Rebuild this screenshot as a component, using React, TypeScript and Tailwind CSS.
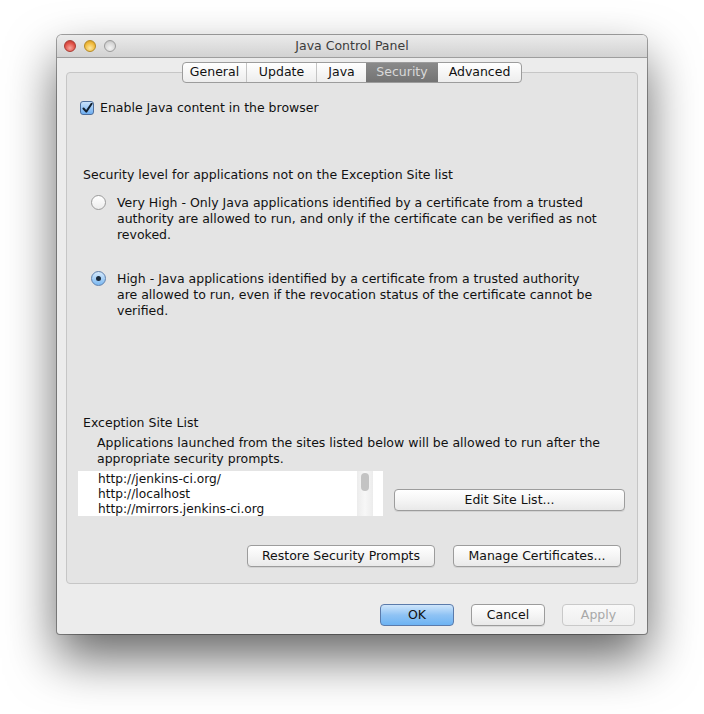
import React from "react";

const font = { fontFamily: '"DejaVu Sans", "Liberation Sans", sans-serif' };

function Btn({ w, label, kind }: { w: string; label: string; kind?: "ok" | "off" }) {
  const base = "h-[22px] rounded-[4px] border flex items-center justify-center text-[12.5px] ";
  if (kind === "ok")
    return (
      <div className={base + w + " border-[#5b7bab] bg-gradient-to-b from-[#cfe6fb] via-[#8fc3f4] to-[#6db3f3] text-[#111]"}>{label}</div>
    );
  if (kind === "off")
    return (
      <div className={base + w + " border-[#c9c9c9] bg-gradient-to-b from-[#f9f9f9] to-[#efefef] text-[#a8a8a8]"}>{label}</div>
    );
  return (
    <div className={base + w + " border-[#9c9c9c] bg-gradient-to-b from-white via-[#f5f5f5] to-[#e9e9e9] text-[#111] shadow-[0_1px_0_rgba(0,0,0,0.08)]"}>{label}</div>
  );
}

function Radio({ on }: { on?: boolean }) {
  if (on)
    return (
      <div className="w-[15px] h-[15px] rounded-full border border-[#5f80ad] bg-gradient-to-b from-[#d5e9fb] to-[#7ab8f1] flex items-center justify-center shrink-0">
        <div className="w-[5px] h-[5px] rounded-full bg-[#1c2a3a]" />
      </div>
    );
  return <div className="w-[15px] h-[15px] rounded-full border border-[#9a9a9a] bg-gradient-to-b from-white to-[#ececec] shrink-0" />;
}

const tabs = [
  { label: "General", w: "w-[63px]" },
  { label: "Update", w: "w-[70px]" },
  { label: "Java", w: "w-[50px]" },
  { label: "Security", w: "w-[72px]" },
  { label: "Advanced", w: "w-[83px]" },
];

export default function App() {
  return (
    <div className="w-[704px] h-[714px] bg-white pt-[35px] pl-[57px]" style={font}>
      <div className="w-[590px] h-[599px] rounded-t-[5px] rounded-b-[3px] bg-[#ececec] shadow-[0_24px_50px_rgba(0,0,0,0.6),0_0_0_1px_rgba(0,0,0,0.35)] flex flex-col">
        {/* title bar */}
        <div className="h-[23px] rounded-t-[5px] bg-gradient-to-b from-[#ebebeb] to-[#d2d2d2] border-b border-[#9e9e9e] flex items-center relative">
          <div className="flex gap-[8px] pl-[7px]">
            <div className="w-[12px] h-[12px] rounded-full border border-[#a83b33] bg-[radial-gradient(circle_at_50%_70%,#f7a49b,#e04f45_60%,#b3342c)]" />
            <div className="w-[12px] h-[12px] rounded-full border border-[#b58a25] bg-[radial-gradient(circle_at_50%_70%,#fde7a0,#f0b93a_60%,#c7901f)]" />
            <div className="w-[12px] h-[12px] rounded-full border border-[#9c9c9c] bg-[radial-gradient(circle_at_50%_70%,#f4f4f4,#d6d6d6_60%,#b4b4b4)]" />
          </div>
          <div className="absolute inset-0 flex items-center justify-center text-[12.5px] text-[#3c3c3c]">Java Control Panel</div>
        </div>

        {/* tabs */}
        <div className="mt-[4px] flex justify-center relative z-10">
          <div className="flex h-[21px] rounded-[4px] border border-[#9c9c9c] bg-gradient-to-b from-white to-[#ededed] overflow-hidden text-[12.5px]">
            {tabs.map((t, i) => (
              <div
                key={t.label}
                className={
                  t.w +
                  " flex items-center justify-center " +
                  (t.label === "Security"
                    ? "bg-gradient-to-b from-[#8a8a8a] to-[#737373] text-[#d9d9d9]"
                    : "text-[#111]") +
                  (i > 0 && t.label !== "Security" && tabs[i - 1].label !== "Security" ? " border-l border-[#c4c4c4]" : "")
                }
              >
                {t.label}
              </div>
            ))}
          </div>
        </div>

        {/* panel */}
        <div className="ml-[9px] -mt-[11px] w-[572px] h-[512px] rounded-[4px] border border-[#c6c6c6] bg-[#e4e4e4] text-[12.5px] text-[#111] flex flex-col">
          <div className="mt-[27px] ml-[13px] flex items-center gap-[6px] h-[16px]">
            <div className="w-[14px] h-[14px] rounded-[3px] border border-[#4d6e9c] bg-gradient-to-b from-[#c9e2fa] to-[#6eaef0] flex items-center justify-center">
              <svg width="11" height="11" viewBox="0 0 11 11">
                <path d="M1.5 5.5 L4.3 8.6 L9.6 0.8" fill="none" stroke="#13202e" strokeWidth="2" strokeLinecap="round" strokeLinejoin="round" />
              </svg>
            </div>
            <span>Enable Java content in the browser</span>
          </div>

          <div className="mt-[51px] ml-[16px] leading-[16px]">Security level for applications not on the Exception Site list</div>

          <div className="mt-[12px] ml-[24px] flex gap-[11px] leading-[16px]">
            <div className="pt-[0px]"><Radio /></div>
            <div>
              Very High - Only Java applications identified by a certificate from a trusted
              <br />
              authority are allowed to run, and only if the certificate can be verified as not
              <br />
              revoked.
            </div>
          </div>

          <div className="mt-[28px] ml-[24px] flex gap-[11px] leading-[16px]">
            <div className="pt-[0px]"><Radio on /></div>
            <div>
              High - Java applications identified by a certificate from a trusted authority
              <br />
              are allowed to run, even if the revocation status of the certificate cannot be
              <br />
              verified.
            </div>
          </div>

          <div className="mt-[96px] ml-[16px] leading-[16px]">Exception Site List</div>
          <div className="mt-[4px] ml-[30px] leading-[16px]">
            Applications launched from the sites listed below will be allowed to run after the
            <br />
            appropriate security prompts.
          </div>

          <div className="mt-[4px] flex items-start">
            <div className="ml-[11px] w-[305px] h-[45px] bg-white flex">
              <div className="w-[279px] pl-[20px] pt-[1px] text-[12.2px] leading-[15px]">
                <div>http://jenkins-ci.org/</div>
                <div>http://localhost</div>
                <div>http://mirrors.jenkins-ci.org</div>
              </div>
              <div className="w-[16px] h-full bg-gradient-to-r from-[#ececec] via-[#f7f7f7] to-[#ececec] flex justify-center pt-[2px]">
                <div className="w-[8px] h-[18px] rounded-full bg-[#c3c3c3]" />
              </div>
            </div>
            <div className="ml-[11px] mt-[18px]">
              <Btn w="w-[231px]" label="Edit Site List..." />
            </div>
          </div>

          <div className="mt-[29px] flex justify-end gap-[18px] pr-[16px]">
            <Btn w="w-[188px]" label="Restore Security Prompts" />
            <Btn w="w-[168px]" label="Manage Certificates..." />
          </div>
        </div>

        <div className="mt-[20px] flex justify-end gap-[17px] pr-[12px]">
          <Btn w="w-[74px]" label="OK" kind="ok" />
          <Btn w="w-[74px]" label="Cancel" />
          <Btn w="w-[73px]" label="Apply" kind="off" />
        </div>
      </div>
    </div>
  );
}
